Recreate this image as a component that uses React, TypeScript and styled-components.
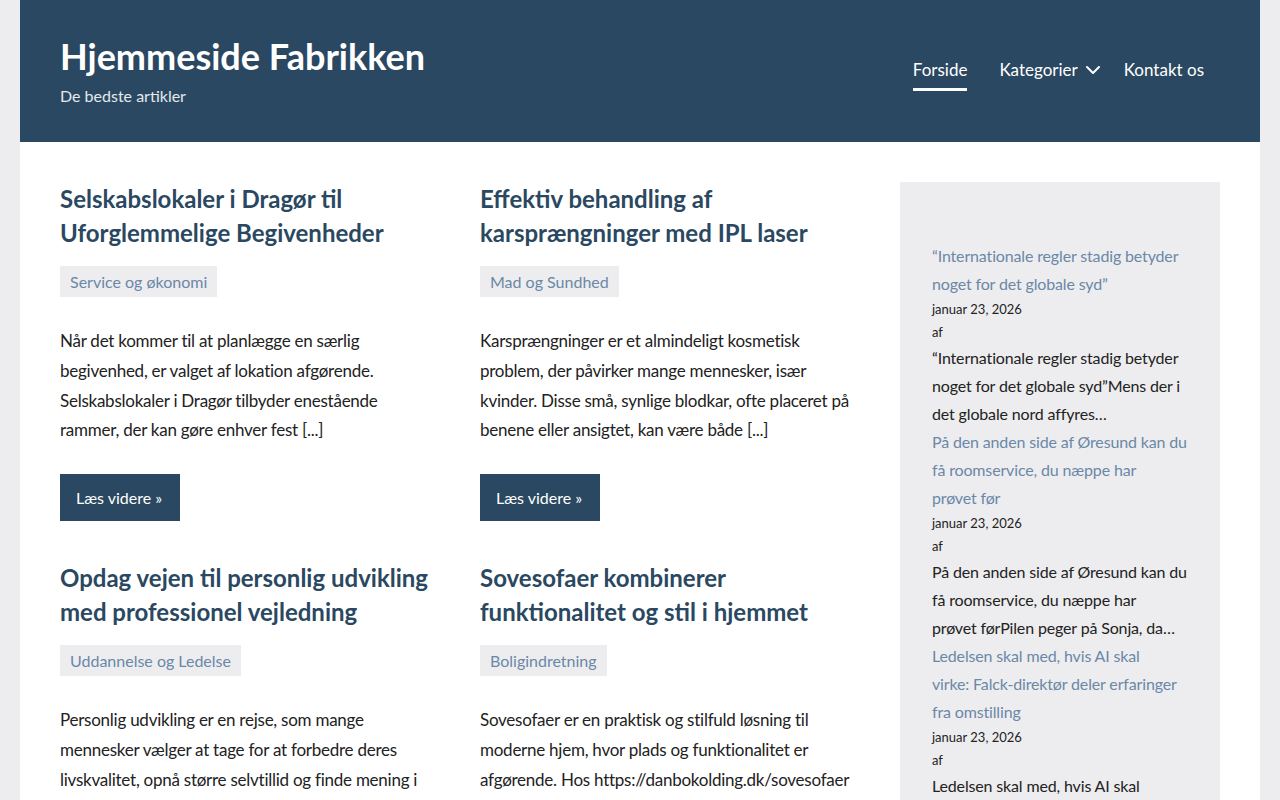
import styled, { createGlobalStyle } from 'styled-components'

const navy = '#2a4861'
const linkBlue = '#6a88a7'
const grey = '#ededef'
const font = "Lato, 'Noto Sans', sans-serif"

type Post = {
  title: string
  category: string
  excerpt: string
}

type Recent = {
  title: string
  date: string
  excerpt: string
}

const posts: Post[] = [
  {
    title: 'Selskabslokaler i Dragør til Uforglemmelige Begivenheder',
    category: 'Service og økonomi',
    excerpt:
      'Når det kommer til at planlægge en særlig begivenhed, er valget af lokation afgørende. Selskabslokaler i Dragør tilbyder enestående rammer, der kan gøre enhver fest [...]',
  },
  {
    title: 'Effektiv behandling af karsprængninger med IPL laser',
    category: 'Mad og Sundhed',
    excerpt:
      'Karsprængninger er et almindeligt kosmetisk problem, der påvirker mange mennesker, især kvinder. Disse små, synlige blodkar, ofte placeret på benene eller ansigtet, kan være både [...]',
  },
  {
    title: 'Opdag vejen til personlig udvikling med professionel vejledning',
    category: 'Uddannelse og Ledelse',
    excerpt:
      'Personlig udvikling er en rejse, som mange mennesker vælger at tage for at forbedre deres livskvalitet, opnå større selvtillid og finde mening i livet. [...]',
  },
  {
    title: 'Sovesofaer kombinerer funktionalitet og stil i hjemmet',
    category: 'Boligindretning',
    excerpt:
      'Sovesofaer er en praktisk og stilfuld løsning til moderne hjem, hvor plads og funktionalitet er afgørende. Hos https://danbokolding.dk/sovesofaer finder du et bredt udvalg [...]',
  },
]

// non-breaking spaces keep the sidebar wrapping as on the live site
const recent: Recent[] = [
  {
    title: '“Internationale regler stadig betyder noget for det globale syd”',
    date: 'januar 23, 2026',
    excerpt: '“Internationale regler stadig betyder noget for det globale syd”Mens der i det globale nord affyres…',
  },
  {
    title: 'På den anden side af Øresund kan du få roomservice, du næppe har prøvet\u00a0før',
    date: 'januar 23, 2026',
    excerpt: 'På den anden side af Øresund kan du få roomservice, du næppe har prøvet\u00a0førPilen peger på Sonja, da…',
  },
  {
    title: 'Ledelsen skal med, hvis AI skal virke:\u00a0Falck-direktør deler erfaringer fra omstilling',
    date: 'januar 23, 2026',
    excerpt: 'Ledelsen skal med, hvis AI skal virke:\u00a0Falck-direktøren fortæller om erfaringerne fra en stor omstilling…',
  },
]

function App() {
  return (
    <>
      <GlobalStyle />
      <Page>
        <Header>
          <Branding>
            <SiteTitle>Hjemmeside Fabrikken</SiteTitle>
            <Tagline>De bedste artikler</Tagline>
          </Branding>
          <Nav>
            <NavItem $active>Forside</NavItem>
            <NavItem>
              Kategorier
              <Chevron width="24" height="24" viewBox="0 0 24 24" fill="none" stroke="currentColor" strokeWidth="2" strokeLinecap="round" strokeLinejoin="round">
                <polyline points="6 9 12 15 18 9" />
              </Chevron>
            </NavItem>
            <NavItem>Kontakt os</NavItem>
          </Nav>
        </Header>
        <Content>
          <PostGrid>
            {posts.map((post) => (
              <Article key={post.title}>
                <PostTitle>{post.title}</PostTitle>
                <Badge>{post.category}</Badge>
                <Excerpt>{post.excerpt}</Excerpt>
                <MoreButton>Læs videre »</MoreButton>
              </Article>
            ))}
          </PostGrid>
          <Sidebar>
            {recent.map((item) => (
              <RecentItem key={item.title}>
                <RecentLink>{item.title}</RecentLink>
                <Meta>{item.date}</Meta>
                <Meta>af</Meta>
                <RecentText>{item.excerpt}</RecentText>
              </RecentItem>
            ))}
          </Sidebar>
        </Content>
      </Page>
    </>
  )
}

const GlobalStyle = createGlobalStyle`
  html, body {
    margin: 0;
    background: ${grey};
    font-family: ${font};
    color: #222;
  }
`

const Page = styled.div`
  width: 1240px;
  margin: 0 auto;
  background: #fff;
  min-height: 800px;
`

const Header = styled.header`
  background: ${navy};
  height: 142px;
  padding: 0 40px;
  box-sizing: border-box;
  display: flex;
  justify-content: space-between;
  align-items: flex-start;
`

const Branding = styled.div`
  padding-top: 34px;
`

const SiteTitle = styled.h1`
  margin: 0;
  font-size: 36px;
  line-height: 44px;
  font-weight: 700;
  color: #fff;
`

const Tagline = styled.p`
  margin: 6px 0 0;
  font-size: 16px;
  line-height: 24px;
  color: #e4e9ee;
`

const Nav = styled.nav`
  display: flex;
  padding-top: 55px;
`

const NavItem = styled.a<{ $active?: boolean }>`
  display: flex;
  align-items: center;
  gap: 3px;
  margin: 0 16px;
  height: 36px;
  font-size: 17px;
  color: #fff;
  border-bottom: 3px solid ${(p) => (p.$active ? '#fff' : 'transparent')};
  box-sizing: border-box;
  padding-bottom: 4px;
`

const Chevron = styled.svg`
  margin-right: -13px;
`

const Content = styled.main`
  display: grid;
  grid-template-columns: 800px 320px;
  column-gap: 40px;
  padding: 40px 40px 0;
`

const PostGrid = styled.div`
  display: grid;
  grid-template-columns: 380px 380px;
  column-gap: 40px;
  row-gap: 40px;
  align-content: start;
`

const Article = styled.article`
  display: flex;
  flex-direction: column;
  align-items: flex-start;
`

const PostTitle = styled.h2`
  margin: 0;
  font-size: 24px;
  line-height: 34px;
  font-weight: 700;
  color: ${navy};
`

const Badge = styled.span`
  margin-top: 16px;
  background: ${grey};
  color: ${linkBlue};
  font-size: 16px;
  line-height: 23px;
  padding: 4px 10px;
`

const Excerpt = styled.p`
  margin: 29px 0 0;
  font-size: 17px;
  line-height: 29.75px;
  letter-spacing: -0.25px;
  color: #222;
`

const MoreButton = styled.a`
  margin-top: 29px;
  background: ${navy};
  color: #fff;
  font-size: 16px;
  line-height: 23px;
  padding: 12px 18px 12px 16px;
`

const Sidebar = styled.aside`
  background: ${grey};
  padding: 60px 32px 32px;
  min-height: 640px;
`

const RecentItem = styled.div`
  display: flex;
  flex-direction: column;
`

const RecentLink = styled.a`
  font-size: 16px;
  line-height: 28px;
  letter-spacing: -0.15px;
  color: ${linkBlue};
`

const Meta = styled.span`
  font-size: 13px;
  line-height: 23px;
  color: #222;
`

const RecentText = styled.p`
  margin: 0;
  font-size: 16px;
  line-height: 28px;
  letter-spacing: -0.15px;
  color: #222;
`

export default App
